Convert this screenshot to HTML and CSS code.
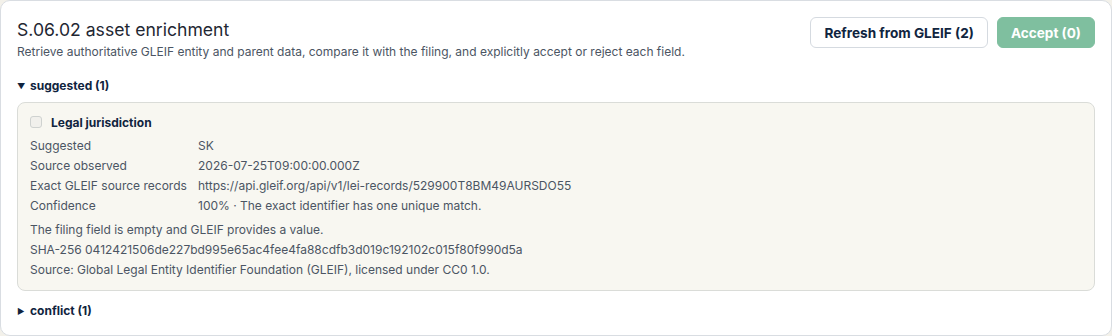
FILE: index.html
```html
<!DOCTYPE html>
<html lang="en">
<head>
<meta charset="utf-8">
<title>S.06.02 asset enrichment</title>
<link rel="stylesheet" href="styles.css">
</head>
<body>
<section class="panel">
  <header class="panel-head">
    <div class="panel-titles">
      <h2 class="panel-title">S.06.02 asset enrichment</h2>
      <p class="panel-sub">Retrieve authoritative GLEIF entity and parent data, compare it with the filing, and explicitly accept or reject each field.</p>
    </div>
    <div class="panel-actions">
      <button class="btn btn-secondary" type="button">Refresh from GLEIF (2)</button>
      <button class="btn btn-primary" type="button">Accept (0)</button>
    </div>
  </header>

  <details class="group" open>
    <summary class="group-sum"><span class="caret">&#9660;</span>suggested (1)</summary>
    <div class="item">
      <label class="item-head"><span class="check"></span><span class="item-name">Legal jurisdiction</span></label>
      <dl class="facts">
        <dt>Suggested</dt><dd>SK</dd>
        <dt>Source observed</dt><dd>2026-07-25T09:00:00.000Z</dd>
        <dt>Exact GLEIF source records</dt><dd>https://api.gleif.org/api/v1/lei-records/529900T8BM49AURSDO55</dd>
        <dt>Confidence</dt><dd>100% · The exact identifier has one unique match.</dd>
      </dl>
      <div class="notes">
        <p>The filing field is empty and GLEIF provides a value.</p>
        <p>SHA-256 0412421506de227bd995e65ac4fee4fa88cdfb3d019c192102c015f80f990d5a</p>
        <p>Source: Global Legal Entity Identifier Foundation (GLEIF), licensed under CC0 1.0.</p>
      </div>
    </div>
  </details>

  <details class="group">
    <summary class="group-sum"><span class="caret">&#9654;</span>conflict (1)</summary>
  </details>
</section>
</body>
</html>
```

FILE: styles.css
```css
* { box-sizing: border-box; }
html, body {
  margin: 0;
  padding: 0;
  background: #f3f1ea;
}
body {
  font-family: Inter, "Noto Sans", "Liberation Sans", sans-serif;
  color: #1f2937;
}
.panel {
  height: 336px;
  background: #ffffff;
  border: 1px solid #d9dde2;
  border-radius: 10px;
  padding: 16px 16px 14px 16px;
}
.panel-head {
  display: flex;
  justify-content: space-between;
  align-items: flex-start;
}
.panel-title {
  margin: 0;
  font-size: 17.6px;
  line-height: 26px;
  font-weight: 400;
  color: #1f2733;
}
.panel-sub {
  margin: 0;
  font-size: 12px;
  line-height: 18px;
  color: #4b5563;
}
.panel-actions {
  display: flex;
  gap: 9px;
  margin-top: 0;
}
.btn {
  font-family: inherit;
  font-size: 13.6px;
  font-weight: 700;
  height: 31px;
  padding: 0 13px;
  border-radius: 6px;
  cursor: pointer;
}
.btn-secondary {
  background: #ffffff;
  border: 1px solid #d5dae0;
  color: #10243e;
}
.btn-primary {
  background: #7fbf9f;
  border: 1px solid #7fbf9f;
  color: #ffffff;
}
.group { margin: 0; }
.group-sum {
  list-style: none;
  display: flex;
  align-items: center;
  font-size: 12px;
  line-height: 20px;
  font-weight: 700;
  color: #10243e;
  cursor: pointer;
}
.group-sum::-webkit-details-marker { display: none; }
.group:first-of-type .group-sum { margin-top: 15px; }
.caret {
  display: inline-block;
  width: 13px;
  font-size: 8px;
  line-height: 20px;
}
.item {
  margin-top: 6px;
  background: #f8f7f1;
  border: 1px solid #dadcd8;
  border-radius: 8px;
  padding: 9px 12px 10px 12px;
}
.item-head {
  display: flex;
  align-items: center;
  gap: 9px;
  height: 20px;
}
.check {
  width: 12px;
  height: 12px;
  border: 1px solid #cfd2d0;
  border-radius: 3px;
  background: #f1f0ec;
}
.item-name {
  font-size: 12px;
  font-weight: 700;
  color: #10243e;
}
.facts {
  margin: 4px 0 0 0;
  display: grid;
  grid-template-columns: 160px 1fr;
  column-gap: 8px;
  font-size: 12px;
  line-height: 20px;
  color: #4b5563;
}
.facts dt, .facts dd { margin: 0; }
.notes {
  margin-top: 4px;
  font-size: 12px;
  line-height: 20px;
  color: #4b5563;
}
.notes p { margin: 0; }
.group + .group .group-sum { margin-top: 10px; }
```
